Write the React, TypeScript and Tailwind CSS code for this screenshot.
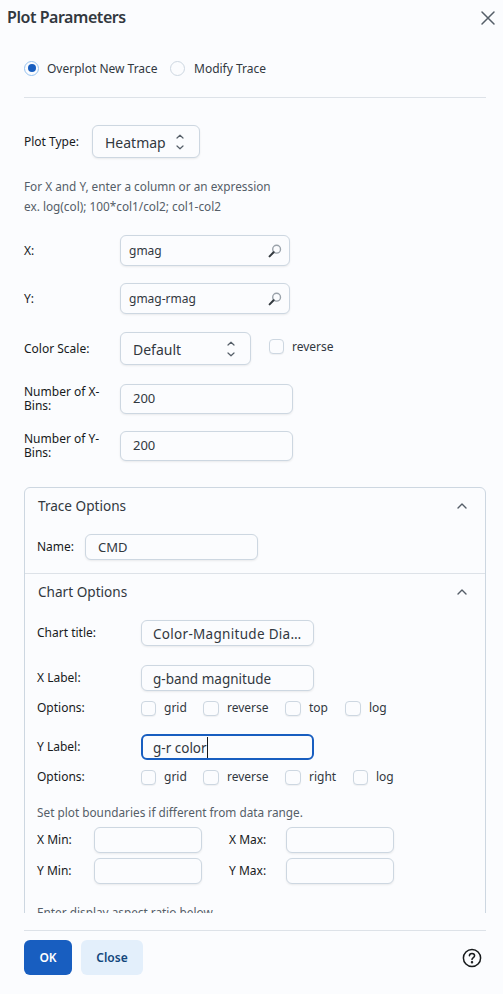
const font = "font-['Noto_Sans','Open_Sans',sans-serif]";

function Caret() {
  return (
    <svg width="12" height="20" viewBox="0 0 12 20" fill="none" stroke="#555e68" strokeWidth="1.2" strokeLinecap="round" strokeLinejoin="round">
      <path d="M3 6 6 3.2 9 6" />
      <path d="M3 14 6 16.8 9 14" />
    </svg>
  );
}

function Search() {
  return (
    <svg width="14" height="14" viewBox="0 0 14 14" fill="none">
      <circle cx="8.6" cy="5.2" r="3.9" stroke="#9aa2aa" strokeWidth="1.4" />
      <path d="M5.6 8.2 1.6 12.4" stroke="#33393f" strokeWidth="2" strokeLinecap="round" />
    </svg>
  );
}

function Chevron() {
  return (
    <svg width="12" height="8" viewBox="0 0 12 8" fill="none" stroke="#555e68" strokeWidth="1.4" strokeLinecap="round" strokeLinejoin="round">
      <path d="M2 6 6 2 10 6" />
    </svg>
  );
}

function Field({
  w,
  h = "h-[26px] pt-[2px]",
  value,
  pl = "pl-3",
  text = "text-[13.5px]",
  focused,
  icon,
}: {
  w: string;
  h?: string;
  value?: string;
  pl?: string;
  text?: string;
  focused?: boolean;
  icon?: boolean;
}) {
  return (
    <div
      className={`${w} ${h} ${pl} ${text} flex items-center justify-between rounded-md bg-[#fbfcfe] text-[#32383e] shrink-0 ${
        focused ? "border-2 border-[#185ec0]" : "border border-[#cdd7e1] shadow-[0_1px_2px_rgba(21,21,21,0.08)]"
      }`}
    >
      <span className="relative whitespace-nowrap">
        {value}
        {focused && <span className="absolute right-[-1px] top-[-1px] h-[21px] w-px bg-[#171a1c]" />}
      </span>
      {icon && (
        <span className="mr-[7px]">
          <Search />
        </span>
      )}
    </div>
  );
}

function Select({ w, value }: { w: string; value: string }) {
  return (
    <div className={`${w} h-[33px] pl-3 pr-[13px] flex items-center justify-between rounded-md border border-[#cdd7e1] bg-[#fbfcfe] text-[14px] text-[#32383e] shadow-[0_1px_2px_rgba(21,21,21,0.08)]`}>
      <span className="pt-[2px]">{value}</span>
      <Caret />
    </div>
  );
}

function Check({ label, box = "w-[15px]" }: { label: string; box?: string }) {
  return (
    <div className="flex items-center gap-2">
      <span className={`${box} h-[15px] rounded-[4px] border border-[#cdd7e1] bg-[#fbfcfe] shadow-[0_1px_1px_rgba(21,21,21,0.05)]`} />
      <span className="text-[12px] text-[#32383e]">{label}</span>
    </div>
  );
}

function OptionRow({ items }: { items: { label: string; w: string; box?: string }[] }) {
  return (
    <div className="flex items-center h-4">
      <span className="w-[104px] text-xs text-[#171a1c]">Options:</span>
      {items.map((it) => (
        <div key={it.label} className={it.w}>
          <Check label={it.label} box={it.box} />
        </div>
      ))}
    </div>
  );
}

export default function App() {
  return (
    <div className={`${font} w-[503px] h-[994px] bg-[#fbfcfe] flex flex-col overflow-hidden relative`}>
      <div className="h-[36px] px-[7px] flex items-center justify-between">
        <h2 className="text-[16px] font-semibold tracking-[-0.45px] text-[#32383e] pb-[2px]">Plot Parameters</h2>
        <svg width="16" height="16" viewBox="0 0 16 16" fill="none" stroke="#555e68" strokeWidth="1.5" strokeLinecap="round">
          <path d="M2 2 14 14M14 2 2 14" />
        </svg>
      </div>

      <div className="h-[877px] overflow-hidden pl-6 pr-[17px] shrink-0">
        <div className="flex items-center h-[16px] mt-[24px] text-xs text-[#32383e]">
          <span className="size-[15px] rounded-full border border-[#97c3f0] bg-[#fbfcfe] flex items-center justify-center mr-2">
            <span className="size-[8px] rounded-full bg-[#185ec0]" />
          </span>
          <span className="w-[123px] pt-[2px]">Overplot New Trace</span>
          <span className="size-[15px] rounded-full border border-[#cdd7e1] bg-[#fbfcfe] mr-[9px]" />
          <span className="pt-[2px]">Modify Trace</span>
        </div>
        <div className="mt-[21px] h-px bg-[#dde2e8]" />

        <div className="mt-[27px] flex items-center">
          <span className="w-[68px] text-xs text-[#171a1c]">Plot Type:</span>
          <Select w="w-[108px]" value="Heatmap" />
        </div>

        <p className="mt-[18px] text-[11.8px] leading-[20px] text-[#555e68]">
          For X and Y, enter a column or an expression
          <br />
          ex. log(col); 100*col1/col2; col1-col2
        </p>

        <div className="mt-[19px] flex items-center">
          <span className="w-[96px] text-xs text-[#171a1c]">X:</span>
          <Field w="w-[170px]" h="h-[31px]" pl="pl-[8px]" text="text-[12px]" value="gmag" icon />
        </div>
        <div className="mt-[17px] flex items-center">
          <span className="w-[96px] text-xs text-[#171a1c]">Y:</span>
          <Field w="w-[170px]" h="h-[31px]" pl="pl-[8px]" text="text-[12px]" value="gmag-rmag" icon />
        </div>

        <div className="mt-[18px] flex items-center">
          <span className="w-[96px] text-xs text-[#171a1c]">Color Scale:</span>
          <Select w="w-[131px]" value="Default" />
          <div className="ml-[18px] mb-[4px]">
            <Check label="reverse" />
          </div>
        </div>

        <div className="mt-[19px] flex items-center">
          <span className="w-[96px] text-xs leading-[14px] text-[#171a1c]">
            Number of X-
            <br />
            Bins:
          </span>
          <Field w="w-[173px]" h="h-[30px]" text="text-[13px]" value="200" />
        </div>
        <div className="mt-[17px] flex items-center">
          <span className="w-[96px] text-xs leading-[14px] text-[#171a1c]">
            Number of Y-
            <br />
            Bins:
          </span>
          <Field w="w-[173px]" h="h-[30px]" text="text-[13px]" value="200" />
        </div>

        <div className="mt-[26px] rounded-t-md border border-[#cdd7e1] w-[462px]">
          <div className="px-[12px] pt-[7px] pb-[13px] border-b border-[#dde2e8]">
            <div className="flex items-center justify-between h-[22px] pr-[5px] text-[13.6px] text-[#32383e]">
              <span className="ml-[1px]">Trace Options</span>
              <Chevron />
            </div>
            <div className="mt-[17px] flex items-center">
              <span className="w-[48px] text-xs text-[#171a1c]">Name:</span>
              <Field w="w-[173px]" text="text-[13px]" value="CMD" />
            </div>
          </div>

          <div className="px-[12px] pt-[7px]">
            <div className="flex items-center justify-between h-[22px] pr-[5px] text-[13.6px] text-[#32383e]">
              <span className="ml-[1px]">Chart Options</span>
              <Chevron />
            </div>
            <div className="mt-[17px] flex items-center">
              <span className="w-[104px] text-xs text-[#171a1c]">Chart title:</span>
              <Field w="w-[173px]" pl="pl-[11px]" text="text-[13.5px] tracking-[0.3px]" value="Color-Magnitude Dia…" />
            </div>
            <div className="mt-[19px] flex items-center">
              <span className="w-[104px] text-xs text-[#171a1c]">X Label:</span>
              <Field w="w-[173px]" pl="pl-[11px]" value="g-band magnitude" />
            </div>
            <div className="mt-[9px]">
              <OptionRow
                items={[
                  { label: "grid", w: "w-[62px]" },
                  { label: "reverse", w: "w-[82px]", box: "w-[16px]" },
                  { label: "top", w: "w-[60px]", box: "w-[16px]" },
                  { label: "log", w: "w-[50px]", box: "w-[16px]" },
                ]}
              />
            </div>
            <div className="mt-[18px] flex items-center">
              <span className="w-[104px] text-xs text-[#171a1c]">Y Label:</span>
              <Field w="w-[173px]" pl="pl-[10px]" value="g-r color" focused />
            </div>
            <div className="mt-[9px]">
              <OptionRow
                items={[
                  { label: "grid", w: "w-[62px]" },
                  { label: "reverse", w: "w-[82px]", box: "w-[16px]" },
                  { label: "right", w: "w-[68px]", box: "w-[16px]" },
                  { label: "log", w: "w-[50px]" },
                ]}
              />
            </div>
            <p className="mt-[18px] text-[11.8px] leading-[18px] text-[#555e68]">Set plot boundaries if different from data range.</p>
            <div className="mt-[6px] flex items-center">
              <span className="w-[57px] text-xs text-[#171a1c]">X Min:</span>
              <Field w="w-[108px]" />
              <span className="ml-[27px] w-[57px] text-xs text-[#171a1c]">X Max:</span>
              <Field w="w-[108px]" />
            </div>
            <div className="mt-[5px] flex items-center">
              <span className="w-[57px] text-xs text-[#171a1c]">Y Min:</span>
              <Field w="w-[108px]" />
              <span className="ml-[27px] w-[57px] text-xs text-[#171a1c]">Y Max:</span>
              <Field w="w-[108px]" />
            </div>
            <p className="mt-[19px] text-[11.8px] leading-[18px] text-[#555e68]">Enter display aspect ratio below.</p>
            <div className="h-[60px]" />
          </div>
        </div>
      </div>

      <div className="ml-6 mr-[17px] mt-[17px] pt-[9px] border-t border-[#dde2e8] flex items-center justify-between">
        <div className="flex gap-[9px]">
          <button className="h-[35px] w-[48px] rounded-md bg-[#185ec0] text-xs font-semibold text-white">OK</button>
          <button className="h-[35px] w-[62px] rounded-md bg-[#e3effb] text-xs font-semibold text-[#12467b]">Close</button>
        </div>
        <svg width="20" height="20" viewBox="0 0 20 20" fill="none" stroke="#171a1c" strokeWidth="1.5" strokeLinecap="round" className="mr-[4px]">
          <circle cx="10" cy="10" r="8.6" />
          <path d="M7.4 7.8C7.4 6.3 8.6 5.4 10 5.4S12.6 6.3 12.6 7.7C12.6 9.6 10 9.6 10 11.6" />
          <circle cx="10" cy="14.3" r="0.5" fill="#171a1c" />
        </svg>
      </div>
    </div>
  );
}
